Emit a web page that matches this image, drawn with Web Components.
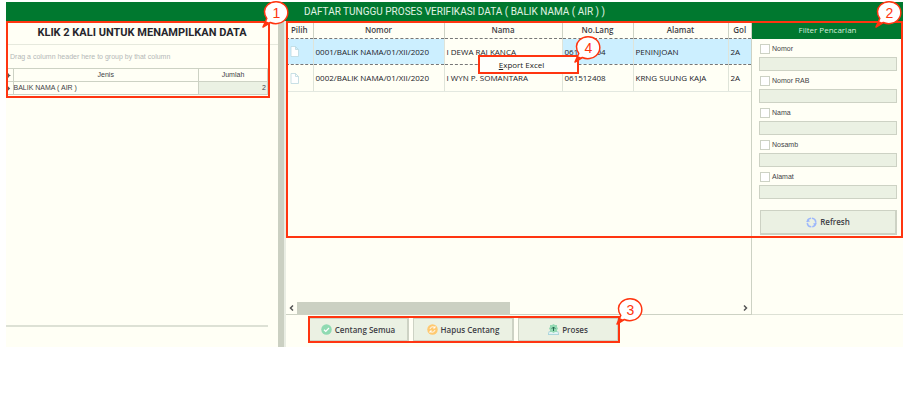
<!DOCTYPE html>
<html lang="id">
<head>
<meta charset="utf-8">
<title>Daftar Tunggu Proses Verifikasi Data</title>
<style>
  :root {
    --green: #00782f;
    --paper: #fffff5;
    --line: #cdd2c4;
    --soft: #ebf1e3;
    --ink: #3f3f46;
    --mark: #ff3510;
  }
  body {
    margin: 0;
    box-sizing: border-box;
    min-height: 100vh;
    padding: 2px 4px 64px 6px;
    display: flex;
    background: #fff;
    color: var(--ink);
    font-family: "Open Sans", "Noto Sans", sans-serif;
    font-size: 8px;
    line-height: 12px;
  }
</style>
</head>
<body>
<verification-app></verification-app>

<script>
function define(name, html, setup) {
  const template = document.createElement('template');
  template.innerHTML = html;
  customElements.define(name, class extends HTMLElement {
    connectedCallback() {
      if (this.shadowRoot) return;
      const root = this.attachShadow({ mode: 'open' });
      root.append(template.content.cloneNode(true));
      if (setup) setup(this, root);
    }
  });
}

/* Numbered speech bubble; its tail points down and to the left */
define('call-out', `
  <style>
    :host { position: absolute; z-index: 5; width: 28px; height: 28px; color: var(--mark); }
    svg { display: block; width: 100%; height: 100%; overflow: visible; }
    span { position: absolute; inset: 0; display: grid; place-items: center; padding: 0 0 3px 1px;
      font: 14px/14px "Liberation Sans", sans-serif; }
  </style>
  <svg viewBox="0 0 28 28" aria-hidden="true">
    <path d="M1 27 L4.800 18.500 C1.500 14 1.700 8.500 5.500 5 C10 .7 17.800 .5 22.300 4.700 C27 9 27 16.200 22.300 20.500 C18.500 24 12.700 24.600 8.300 22.500 Z"
      fill="#fff" stroke="currentColor" stroke-width="1.500" stroke-linejoin="round"/>
    <path d="M1 27 L3.500 21 L8 23 Z" fill="currentColor"/>
  </svg>
  <span><slot></slot></span>
`);

define('mark-frame', `
  <style>
    :host { position: absolute; inset: 0; z-index: 3; box-sizing: border-box; border: 2px solid var(--mark); pointer-events: none; }
  </style>
`);

define('app-icon', `
  <style>
    :host { display: block; width: 11px; height: 11px; }
    svg { display: none; width: 100%; height: 100%; }
    :host([name=check]) .check, :host([name=undo]) .undo, :host([name=run]) .run,
    :host([name=refresh]) .refresh, :host([name=page]) .page { display: block; }
  </style>
  <svg class="check" viewBox="0 0 22 22"><circle cx="11" cy="11" r="10.500" fill="#8fdab2"/><path d="M6 11.500 9.500 15 16 8" fill="none" stroke="#fff" stroke-width="2.400"/></svg>
  <svg class="undo" viewBox="0 0 22 22"><circle cx="11" cy="11" r="10.500" fill="#ffc970"/><path d="M6 10a5.500 5.500 0 0 1 10-2M16 12a5.500 5.500 0 0 1-10 2M16 4v4h-4M6 18v-4h4" fill="none" stroke="#fff" stroke-width="1.700"/></svg>
  <svg class="run" viewBox="0 0 22 22"><path d="M3 14 0 21h22l-3-7" fill="#e3f3f4" stroke="#a5d3da" stroke-width="1.800"/><path d="m11 0 3 2h4v4l2 3-2 3v4h-4l-3 2-3-2H4v-4L2 9l2-3V2h4Z" fill="#94d9b3"/><path d="M11 14V6M7.500 9.500 11 6l3.500 3.500" fill="none" stroke="#23684c" stroke-width="2"/></svg>
  <svg class="refresh" viewBox="0 0 22 22"><circle cx="11" cy="11" r="8.500" fill="none" stroke="#9db8fb" stroke-width="3.200" stroke-dasharray="11.500 1.850"/><path d="m1 10 3-6 4 5ZM21 12l-3 6-4-5Z" fill="#9db8fb"/></svg>
  <svg class="page" viewBox="0 0 22 22"><path d="M4 1h9l6 6v14H4ZM13 1v6h6" fill="#fff" stroke="#bbd8e0" stroke-width="1.600"/></svg>
`);

define('tool-button', `
  <style>
    :host { display: block; }
    button { width: 100%; height: 100%; display: flex; align-items: center; justify-content: center; gap: 3px;
      border: 1px solid var(--line); border-right-width: 2px; border-bottom-width: 2px; background: var(--soft); padding: 0;
      color: var(--ink); font: 600 8px/12px "Open Sans", sans-serif; }
  </style>
  <button type="button"><app-icon></app-icon><slot></slot></button>
`, (host, root) => root.querySelector('app-icon').setAttribute('name', host.getAttribute('icon')));

/* Left panel: summary grid */
define('summary-panel', `
  <style>
    :host { display: flex; flex-direction: column; background: var(--paper); }
    section { position: relative; }
    h2 { box-sizing: border-box; margin: 0; padding-top: 2px; height: 24px; border-bottom: 1px solid #e6e9dd; text-align: center;
      font: 700 11px/20px Roboto, sans-serif; color: #26262c; }
    p { margin: 0; padding: 0 4px; height: 23px; line-height: 23px; color: #b4b8b7;
      font-family: "Liberation Sans", sans-serif; font-size: 7px; }
    table { width: calc(100% - 10px); border-collapse: collapse; table-layout: fixed;
      font: 7px/12px "Liberation Sans", sans-serif; }
    th, td { padding: 0; height: 12px; border: 1px solid var(--line); font-weight: 400; white-space: nowrap; }
    th:first-child, td:first-child { border-left: 0; }
    td:last-child { background: var(--soft); text-align: right; padding-right: 1px; }
    td svg, th svg { display: block; width: 5px; height: 5px; fill: #555; }
    mark-frame { right: 8px; bottom: -3px; }
    .rest { flex: 1; margin-right: 10px; border-bottom: 2px solid #dde1d5; }
    .foot { height: 20px; }
    call-out { right: -12px; top: -21px; }
  </style>
  <section>
    <h2>KLIK 2 KALI UNTUK MENAMPILKAN DATA</h2>
    <p>Drag a column header here to group by that column</p>
    <table>
      <colgroup><col style="width:7px"><col><col style="width:69px"></colgroup>
      <thead><tr><th><svg viewBox="0 0 6 6"><path d="M3 0 4 2 6 3 4 4 3 6 2 4 0 3 2 2Z"/></svg></th><th>Jenis</th><th>Jumlah</th></tr></thead>
      <tbody><tr><td><svg viewBox="0 0 6 6"><path d="M2 0 5 3 2 6Z"/></svg></td><td>BALIK NAMA ( AIR )</td><td>2</td></tr></tbody>
    </table>
    <mark-frame></mark-frame>
    <call-out>1</call-out>
  </section>
  <div class="rest"></div>
  <div class="foot"></div>
`);

define('queue-grid', `
  <style>
    :host { display: flex; flex-direction: column; position: relative; border-right: 1px solid var(--line); }
    table { width: 100%; table-layout: fixed; border-collapse: collapse; }
    th, td { padding: 0 2px; border-right: 1px solid #dfe4d9; white-space: nowrap; overflow: hidden; }
    th { height: 17px; font-weight: 600; border-color: var(--line); }
    td { height: 26px; border-bottom: 1px solid #e3e8e0; color: #222228; }
    th:last-child, td:last-child { border-right: 0; }
    td:first-child { padding: 0 2px 0 3px; }
    tr.on td { height: 25px; background: #ccefff; border-top: 1px dashed #777; border-bottom: 1px dashed #777; }
    tr.on td.focus { background: var(--paper); }
    menu { position: absolute; z-index: 4; left: 192px; top: 34px; margin: 0; padding: 0; list-style: none; }
    menu button { width: 101px; height: 19px; padding: 0 14px 0 0; border: 2px solid var(--mark); background: #fffffb;
      color: #222; font: 8px/14px "Open Sans", sans-serif; }
    call-out { left: 288px; top: 14px; }
    .space { flex: 1; }
    .scroll { display: flex; align-items: center; height: 12px; border-bottom: 1px solid var(--line); }
    .scroll i { width: 11px; display: grid; place-items: center; }
    .scroll svg { width: 5px; height: 6px; fill: none; stroke: #555; stroke-width: 1.500; }
    .track { flex: 1; align-self: stretch; }
    .thumb { width: 48%; height: 100%; background: #cbd0c2; }
  </style>
  <table>
    <colgroup><col style="width:27px"><col style="width:131px"><col style="width:118px"><col style="width:71px"><col style="width:95px"><col style="width:23px"></colgroup>
    <thead><tr><th>Pilih</th><th>Nomor</th><th>Nama</th><th>No.Lang</th><th>Alamat</th><th>Gol</th></tr></thead>
    <tbody>
      <tr class="on"><td><app-icon name="page"></app-icon></td><td>0001/BALIK NAMA/01/XII/2020</td><td class="focus">I DEWA RAI KANCA</td><td>061512404</td><td>PENINJOAN</td><td>2A</td></tr>
      <tr><td><app-icon name="page"></app-icon></td><td>0002/BALIK NAMA/01/XII/2020</td><td>I WYN P. SOMANTARA</td><td>061512408</td><td>KRNG SUUNG KAJA</td><td>2A</td></tr>
    </tbody>
  </table>
  <menu><li><button type="button"><u>E</u>xport Excel</button></li></menu>
  <call-out>4</call-out>
  <div class="space"></div>
  <div class="scroll">
    <i><svg viewBox="0 0 5 6"><path d="M4 .5 1.500 3 4 5.500"/></svg></i>
    <div class="track"><div class="thumb"></div></div>
    <i><svg viewBox="0 0 5 6"><path d="M1 .5 3.500 3 1 5.500"/></svg></i>
  </div>
`);

define('filter-field', `
  <style>
    :host { display: block; height: 32px; font: 7px/12px "Liberation Sans", sans-serif; }
    label { display: flex; align-items: center; gap: 2px; height: 14px; padding-left: 1px; }
    input { box-sizing: border-box; display: block; appearance: none; margin: 0; border: 1px solid var(--line); }
    [type=checkbox] { width: 10px; height: 10px; background: #fff; }
    [type=text] { width: 100%; height: 14px; margin-top: 1px; background: var(--soft); font: inherit; }
  </style>
  <label><input type="checkbox"><span></span></label>
  <input type="text">
`, (host, root) => {
  const name = host.getAttribute('label');
  root.querySelector('span').textContent = name;
  root.querySelector('[type=text]').setAttribute('aria-label', name);
});

define('filter-panel', `
  <style>
    :host { display: block; background: var(--paper); }
    h2 { margin: 1px 0 0; height: 17px; text-align: center; background: var(--green); color: #d5eedb;
      font: 8px/16px "Open Sans", sans-serif; }
    form { padding: 3px 6px 0 7px; }
    tool-button { height: 25px; margin: 8px 0 0 1px; }
  </style>
  <h2>Filter Pencarian</h2>
  <form>
    <filter-field label="Nomor"></filter-field>
    <filter-field label="Nomor RAB"></filter-field>
    <filter-field label="Nama"></filter-field>
    <filter-field label="Nosamb"></filter-field>
    <filter-field label="Alamat"></filter-field>
    <tool-button icon="refresh">Refresh</tool-button>
  </form>
`);

define('queue-panel', `
  <style>
    :host { position: relative; display: grid; grid-template: 1fr 32px / 1fr 151px; background: var(--paper); }
    .main { inset: 0 0 auto 0; height: 217px; }
    .two { right: 0; top: -21px; }
    filter-panel { border-bottom: 1px solid #dde1d5; }
    footer { position: relative; justify-self: start; display: flex; gap: 4px; margin: 3px 0 4px 22px; height: 24px; }
    footer mark-frame { inset: -2px -1px -1px 0; }
    footer tool-button { width: 101px; }
    .three { right: -25px; top: -21px; }
  </style>
  <queue-grid></queue-grid>
  <filter-panel></filter-panel>
  <footer>
    <tool-button icon="check">Centang Semua</tool-button>
    <tool-button icon="undo">Hapus Centang</tool-button>
    <tool-button icon="run">Proses</tool-button>
    <mark-frame></mark-frame>
    <call-out class="three">3</call-out>
  </footer>
  <mark-frame class="main"></mark-frame>
  <call-out class="two">2</call-out>
`);

define('verification-app', `
  <style>
    :host { flex: 1; display: grid; grid-template: 19px 1fr / 273fr 8px 616fr; }
    h1 { grid-column: 1 / -1; margin: 0; text-align: center; background: var(--green); color: #e0f3e5;
      font: 10px/19px Roboto, sans-serif; }
    .split { background: #cbd0c2; border-right: 2px solid #e9ede3; }
  </style>
  <h1>DAFTAR TUNGGU PROSES VERIFIKASI DATA ( BALIK NAMA ( AIR ) )</h1>
  <summary-panel></summary-panel>
  <div class="split"></div>
  <queue-panel></queue-panel>
`);
</script>
</body>
</html>
